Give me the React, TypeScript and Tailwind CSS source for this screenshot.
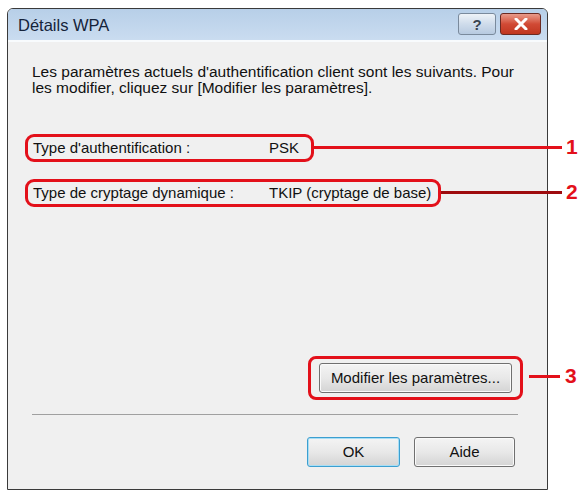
import React from 'react';

function TitleButtons() {
  return (
    <div className="flex gap-[4px] pt-[4px]">
      <div className="flex h-[22px] w-[38px] items-center justify-center rounded-[3px] border border-[#7a8a9c] bg-gradient-to-b from-[#eef3f8] via-[#cfdceb] to-[#b7cae0]">
        <span className="text-[15px] font-bold leading-none text-[#3a4450]">?</span>
      </div>
      <div className="flex h-[22px] w-[41px] items-center justify-center rounded-[3px] border border-[#6b2a22] bg-gradient-to-b from-[#e89a8a] via-[#d14a35] to-[#c0361f]">
        <svg width="14" height="12" viewBox="0 0 14 12">
          <path d="M2 1 L12 11 M12 1 L2 11" stroke="#ffffff" strokeWidth="3" strokeLinecap="round" />
        </svg>
      </div>
    </div>
  );
}

function VistaButton({ label, focused, width }: { label: string; focused?: boolean; width: string }) {
  return (
    <div
      className={`flex h-[30px] ${width} items-center justify-center rounded-[3px] border bg-gradient-to-b from-[#f4f4f4] via-[#e8e8e8] to-[#d4d4d4] text-[15px] text-[#111] ${
        focused ? 'border-[#3c9fd0] shadow-[inset_0_0_0_1px_#a8def5]' : 'border-[#707070] shadow-[inset_0_0_0_1px_#fafafa]'
      }`}
    >
      {label}
    </div>
  );
}

export default function App() {
  return (
    <div className="relative h-[496px] w-[584px] overflow-hidden bg-white pl-[7px] pt-[8px] font-['Liberation_Sans',Arial,sans-serif]">
      <div className="flex h-[482px] w-[541px] flex-col rounded-t-[6px] border border-[#3a3a3a] shadow-[inset_-1px_-1px_0_#6cc6dc]">
        {/* title bar */}
        <div className="flex h-[31px] items-start justify-between rounded-t-[5px] bg-gradient-to-b from-[#b7cfe8] to-[#cadcf0] pl-[10px] pr-[6px]">
          <span className="pt-[8px] text-[16.5px] leading-[16px] text-[#15233a]">Détails WPA</span>
          <TitleButtons />
        </div>
        <div className="h-[2px] bg-[#f8fbfd]" />

        {/* body */}
        <div className="flex flex-1 flex-col bg-[#f0f0f0] pl-[17px] pr-[22px]">
          <p className="pl-[7px] pt-[22px] text-[15.5px] leading-[16px] text-[#111]">
            Les paramètres actuels d'authentification client sont les suivants. Pour
            <br />
            les modifier, cliquez sur [Modifier les paramètres].
          </p>

          <div className="mt-[38px] flex h-[28px] w-[289px] items-center rounded-[9px] border-[3px] border-[#e3101a] pl-[5px] text-[15px] text-[#111]">
            <span className="w-[236px]">Type d'authentification :</span>
            <span>PSK</span>
          </div>

          <div className="mt-[17px] flex h-[28px] w-[416px] items-center rounded-[9px] border-[3px] border-[#e3101a] pl-[5px] text-[15px] text-[#111]">
            <span className="w-[236px]">Type de cryptage dynamique :</span>
            <span>TKIP (cryptage de base)</span>
          </div>

          <div className="mt-[149px] flex justify-end pr-[2px]">
            <div className="rounded-[8px] border-[3px] border-[#e3101a] px-[8px] py-[4px]">
              <VistaButton label="Modifier les paramètres..." width="w-[193px]" />
            </div>
          </div>

          <div className="ml-[7px] mt-[14px] h-[2px] w-[486px] border-t border-[#a0a0a0] border-b-white" />

          <div className="mt-[21px] flex justify-end gap-[14px] pr-[10px]">
            <VistaButton label="OK" focused width="w-[93px]" />
            <VistaButton label="Aide" width="w-[101px]" />
          </div>
        </div>
      </div>

      {/* callouts */}
      <div className="absolute left-[314px] top-[146px] h-[3px] w-[248px] bg-[#e3101a]" />
      <span className="absolute left-[566px] top-[135px] text-[21px] font-bold leading-[24px] text-[#e3101a]">1</span>
      <div className="absolute left-[441px] top-[191px] h-[3px] w-[121px] bg-[#9e0b0e]" />
      <span className="absolute left-[566px] top-[180px] text-[21px] font-bold leading-[24px] text-[#e3101a]">2</span>
      <div className="absolute left-[529px] top-[375px] h-[3px] w-[31px] bg-[#e3101a]" />
      <span className="absolute left-[565px] top-[364px] text-[21px] font-bold leading-[24px] text-[#e3101a]">3</span>
    </div>
  );
}
